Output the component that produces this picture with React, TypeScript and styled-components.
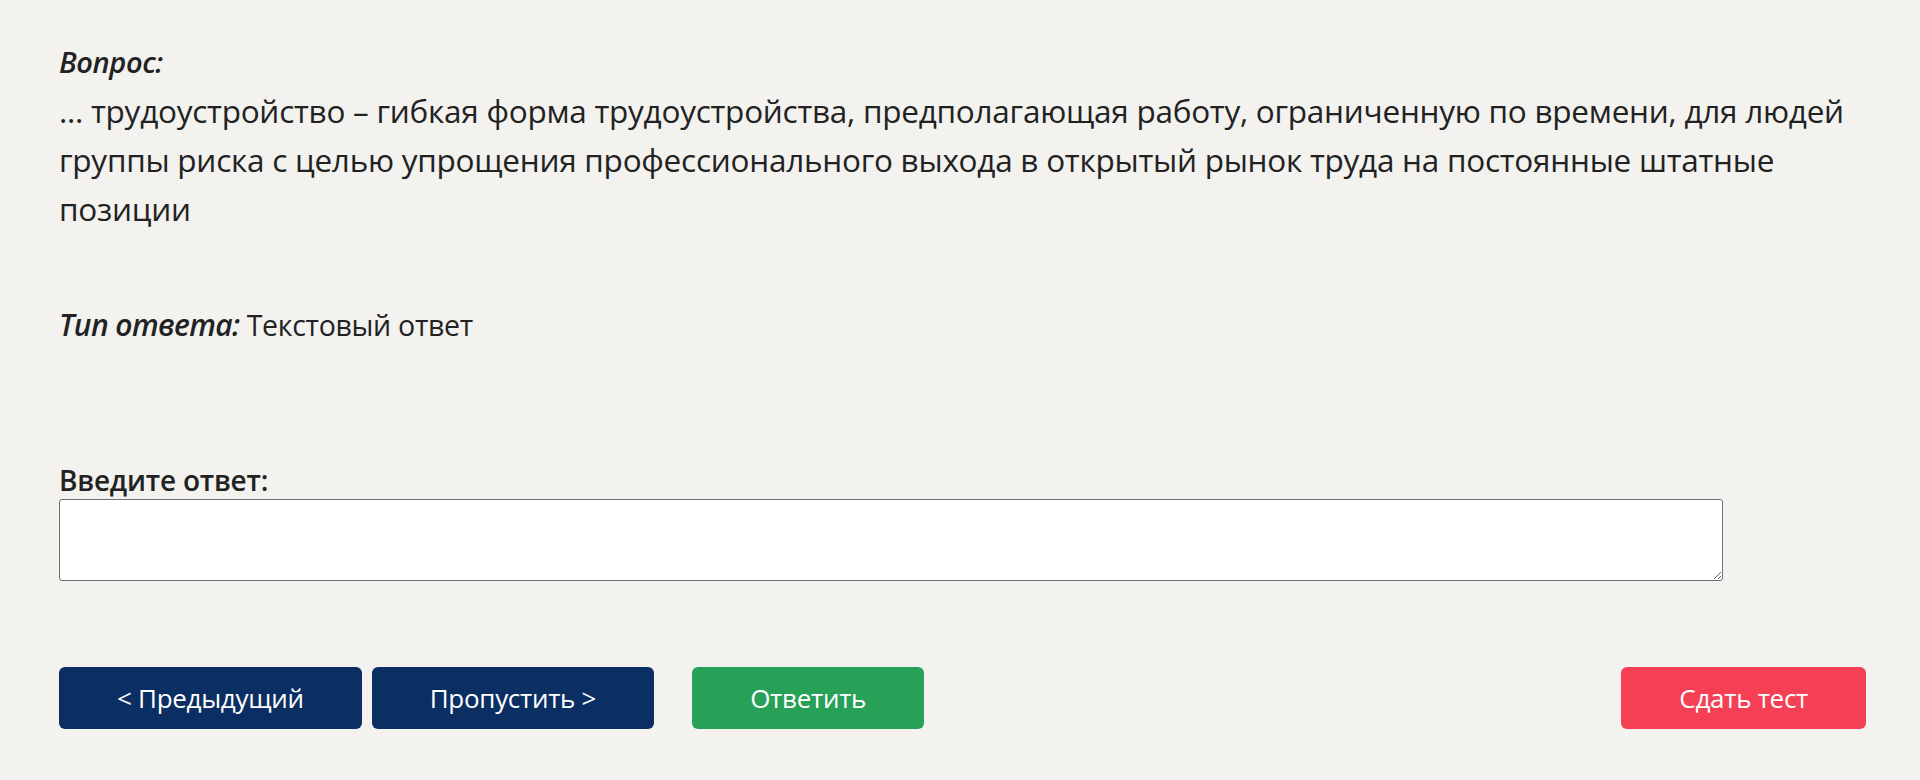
import React from "react";
import styled, { createGlobalStyle } from "styled-components";

const Global = createGlobalStyle`
  html, body {
    margin: 0;
    padding: 0;
    background: #f3f2ef;
  }
  body {
    font-family: "Open Sans", "Noto Sans", "Liberation Sans", sans-serif;
    color: #222222;
  }
  * { box-sizing: border-box; }
`;

const Page = styled.main`
  padding: 37px 54px 40px 59px;
  display: flex;
  flex-direction: column;
`;

const QuestionBlock = styled.section`
  display: flex;
  flex-direction: column;
`;

const Label = styled.div`
  font-size: 29px;
  line-height: 49px;
  font-style: italic;
  font-weight: 600;
  letter-spacing: -0.4px;
`;

const QuestionText = styled.p`
  margin: 0;
  font-size: 31.5px;
  line-height: 49px;
  font-weight: 400;
  letter-spacing: -0.25px;
`;

const TypeRow = styled.div`
  margin-top: 67px;
  font-size: 28.5px;
  line-height: 49px;
  letter-spacing: -0.3px;
`;

const TypeLabel = styled.em`
  font-size: 30px;
  font-style: italic;
  font-weight: 600;
  letter-spacing: -0.6px;
`;

const AnswerLabel = styled.label`
  margin-top: 112px;
  font-size: 28px;
  line-height: 36px;
  font-weight: 600;
  letter-spacing: -0.2px;
`;

const AnswerInput = styled.textarea`
  margin-top: 1px;
  width: 1664px;
  height: 82px;
  background: #ffffff;
  border: 1px solid #6f6f6f;
  border-radius: 3px;
  font-family: inherit;
  font-size: 24px;
  padding: 6px 10px;
  resize: both;
`;

const ButtonRow = styled.div`
  margin-top: 86px;
  display: flex;
  align-items: center;
  gap: 10px;
`;

const Button = styled.button<{ $tone: "navy" | "green" | "red"; $gapBefore?: number; $push?: boolean }>`
  height: 62px;
  padding: 0 58px;
  border: none;
  border-radius: 6px;
  font-family: inherit;
  font-size: 26px;
  letter-spacing: -0.3px;
  color: #ffffff;
  cursor: pointer;
  background: ${(p) => (p.$tone === "navy" ? "#0b2e63" : p.$tone === "green" ? "#27a058" : "#f53f54")};
  margin-left: ${(p) => (p.$push ? "auto" : `${p.$gapBefore ?? 0}px`)};
`;

export default function App() {
  return (
    <>
      <Global />
      <Page>
        <QuestionBlock>
          <Label>Вопрос:</Label>
          <QuestionText>
            ... трудоустройство – гибкая форма трудоустройства, предполагающая работу, ограниченную по времени, для людей
            группы риска с целью упрощения профессионального выхода в открытый рынок труда на постоянные штатные позиции
          </QuestionText>
        </QuestionBlock>
        <TypeRow>
          <TypeLabel>Тип ответа:</TypeLabel> Текстовый ответ
        </TypeRow>
        <AnswerLabel htmlFor="answer">Введите ответ:</AnswerLabel>
        <AnswerInput id="answer" />
        <ButtonRow>
          <Button $tone="navy">&lt; Предыдущий</Button>
          <Button $tone="navy">Пропустить &gt;</Button>
          <Button $tone="green" $gapBefore={28}>Ответить</Button>
          <Button $tone="red" $push>Сдать тест</Button>
        </ButtonRow>
      </Page>
    </>
  );
}
